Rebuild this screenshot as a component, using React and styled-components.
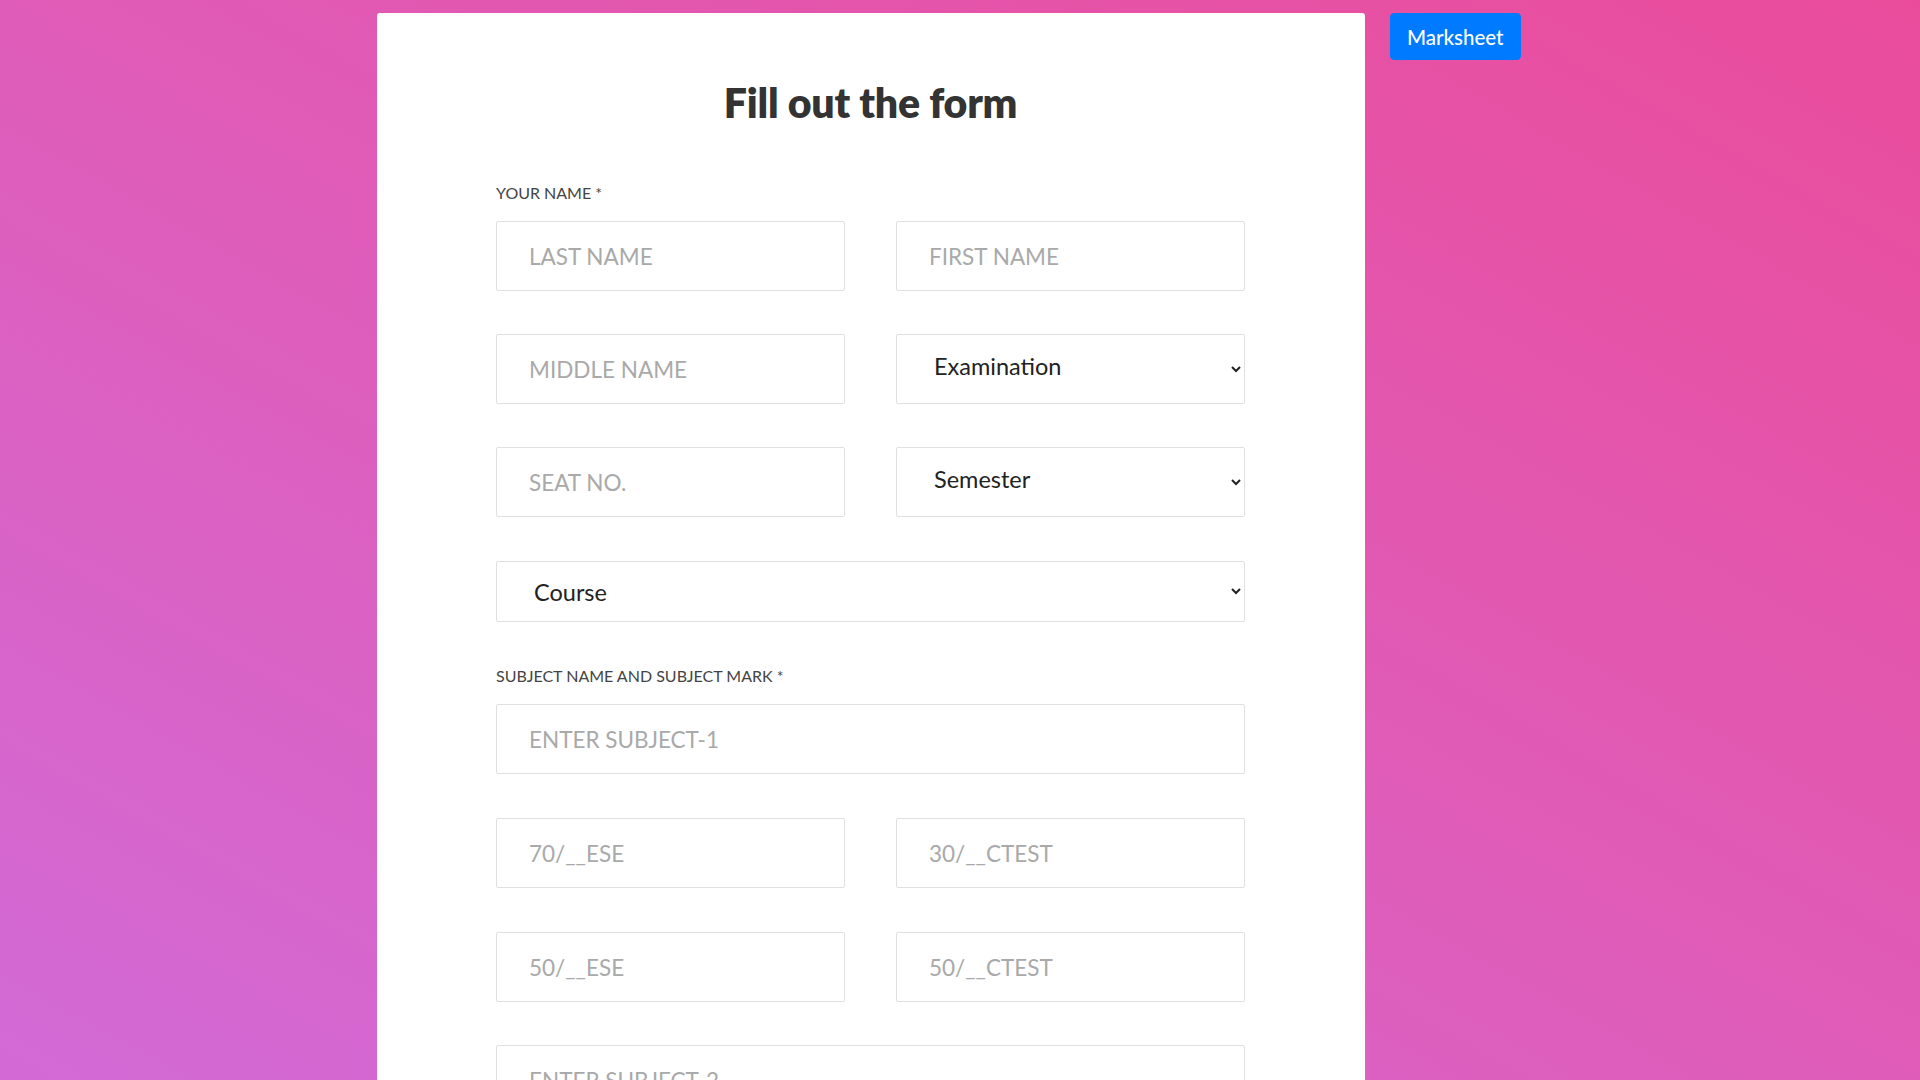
import React from "react";
import styled, { createGlobalStyle } from "styled-components";

const upArrow =
  "data:image/svg+xml;utf8,<svg xmlns='http://www.w3.org/2000/svg' width='21' height='21'><path d='M6 15 L10.5 10.5 L15 15 Z' fill='%23505050'/></svg>";
const downArrow =
  "data:image/svg+xml;utf8,<svg xmlns='http://www.w3.org/2000/svg' width='21' height='21'><path d='M6 7 L10.5 11.5 L15 7 Z' fill='%23505050'/></svg>";

const Global = createGlobalStyle`
  html, body {
    margin: 0;
    padding: 0;
  }
  html {
    overflow-y: scroll;
  }
  body {
    font-family: Lato, "Open Sans", "Liberation Sans", sans-serif;
    background: linear-gradient(to top right, #d26ad6 0%, #df5cb8 50%, #ea4c9b 100%);
    background-attachment: fixed;
    min-height: 100vh;
  }
  * { box-sizing: border-box; }
  ::-webkit-scrollbar {
    width: 21px;
    background: #f1f1f1;
  }
  ::-webkit-scrollbar-track {
    background: #f1f1f1;
  }
  ::-webkit-scrollbar-thumb {
    background: #c1c1c1;
    border-left: 2px solid #f1f1f1;
    border-right: 2px solid #f1f1f1;
  }
  ::-webkit-scrollbar-button:single-button {
    display: block;
    height: 21px;
    background-color: #f1f1f1;
    background-repeat: no-repeat;
    background-position: center;
  }
  ::-webkit-scrollbar-button:single-button:vertical:decrement {
    background-image: url("${upArrow}");
  }
  ::-webkit-scrollbar-button:single-button:vertical:increment {
    background-image: url("${downArrow}");
  }
`;

const Page = styled.div`
  display: flex;
  align-items: flex-start;
  gap: 25px;
  padding: 13px 0 40px 377px;
`;

const Card = styled.div`
  width: 988px;
  flex-shrink: 0;
  background: #ffffff;
  border-radius: 3px;
  padding: 67px 120px 80px 119px;
`;

const Title = styled.h1`
  margin: 0 0 58px;
  text-align: center;
  font-size: 41px;
  line-height: 46px;
  font-weight: 800;
  color: #333333;
  letter-spacing: -0.2px;
`;

const Label = styled.div`
  font-size: 16px;
  line-height: 18px;
  color: #444444;
  text-transform: uppercase;
  margin-bottom: 19px;
`;

const Row = styled.div`
  display: grid;
  grid-template-columns: 1fr 1fr;
  column-gap: 51px;
  margin-bottom: ${(p) => p.$gap || 43}px;
`;

const Full = styled.div`
  margin-bottom: ${(p) => p.$gap || 43}px;
`;

const Input = styled.input`
  display: block;
  width: 100%;
  height: 70px;
  border: 1px solid #e0e0e0;
  border-radius: 2px;
  padding: 0 20px 0 32px;
  font-family: Lato, "Open Sans", sans-serif;
  font-size: 22.5px;
  color: #333;
  background: #fff;
  outline: none;
  &::placeholder {
    color: #a9a9a9;
    text-transform: uppercase;
  }
`;

const Select = styled.select`
  display: block;
  width: 100%;
  height: ${(p) => p.$h || 70}px;
  border: 1px solid #e0e0e0;
  border-radius: 2px;
  padding: 0 6px ${(p) => p.$pb ?? 6}px 33px;
  font-family: Lato, "Open Sans", sans-serif;
  font-size: 23.5px;
  color: #222;
  background: #fff;
  outline: none;
`;

const SideButton = styled.button`
  flex-shrink: 0;
  background: #007bff;
  color: #fff;
  border: 1px solid #007bff;
  border-radius: 4px;
  height: 47px;
  padding: 0 16px;
  font-family: Lato, "Open Sans", sans-serif;
  font-size: 20.5px;
  font-weight: 500;
  cursor: pointer;
`;

const Submit = styled.button`
  display: block;
  width: 100%;
  height: 60px;
  background: #007bff;
  color: #fff;
  border: none;
  border-radius: 4px;
  font-family: Lato, "Open Sans", sans-serif;
  font-size: 22px;
  font-weight: 700;
  letter-spacing: 1px;
`;

const subjects = [
  ["70/__ESE", "30/__CTEST", "50/__ESE", "50/__CTEST"],
  ["70/__ESE", "30/__CTEST", "50/__ESE", "50/__CTEST"],
  ["70/__ESE", "30/__CTEST", "50/__ESE", "50/__CTEST"],
  ["70/__ESE", "30/__CTEST", "50/__ESE", "50/__CTEST"],
  ["70/__ESE", "30/__CTEST", "50/__ESE", "50/__CTEST"],
];

export default function App() {
  return (
    <>
      <Global />
      <Page>
        <Card>
          <Title>Fill out the form</Title>
          <Label>Your name *</Label>
          <Row>
            <Input placeholder="LAST NAME" />
            <Input placeholder="FIRST NAME" />
          </Row>
          <Row>
            <Input placeholder="MIDDLE NAME" />
            <Select defaultValue="">
              <option value="">Examination</option>
              <option>Winter</option>
              <option>Summer</option>
            </Select>
          </Row>
          <Row $gap={44}>
            <Input placeholder="SEAT NO." />
            <Select defaultValue="">
              <option value="">Semester</option>
              <option>1</option>
              <option>2</option>
              <option>3</option>
              <option>4</option>
              <option>5</option>
              <option>6</option>
            </Select>
          </Row>
          <Full $gap={45}>
            <Select $h={61} $pb={0} defaultValue="">
              <option value="">Course</option>
              <option>Computer Engineering</option>
              <option>Information Technology</option>
            </Select>
          </Full>
          <Label>Subject name and subject mark *</Label>
          {subjects.map((s, i) => (
            <React.Fragment key={i}>
              <Full $gap={44}>
                <Input placeholder={`ENTER SUBJECT-${i + 1}`} />
              </Full>
              <Row $gap={44}>
                <Input placeholder={s[0]} />
                <Input placeholder={s[1]} />
              </Row>
              <Row $gap={43}>
                <Input placeholder={s[2]} />
                <Input placeholder={s[3]} />
              </Row>
            </React.Fragment>
          ))}
          <Submit>SUBMIT</Submit>
        </Card>
        <SideButton>Marksheet</SideButton>
      </Page>
    </>
  );
}
